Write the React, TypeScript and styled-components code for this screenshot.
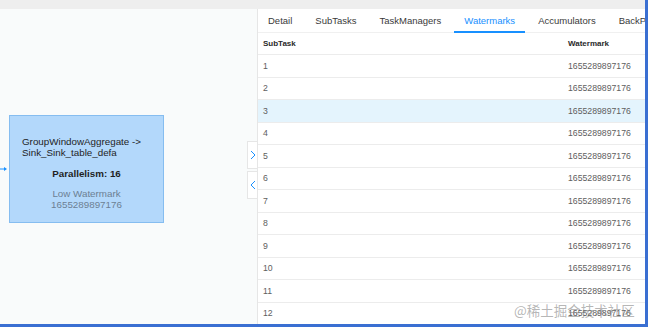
import React from "react";
import styled, { createGlobalStyle } from "styled-components";

const Global = createGlobalStyle`
  html, body { margin: 0; padding: 0; overflow: hidden; background: #ffffff; }
  body { font-family: "Liberation Sans", Arial, sans-serif; }
`;

const Frame = styled.div`
  width: 648px;
  height: 327px;
  box-sizing: border-box;
  border-right: 3px solid #3a6fd2;
  border-bottom: 3px solid #3a6fd2;
  display: flex;
  flex-direction: column;
  overflow: hidden;
  position: relative;
`;

const TopBar = styled.div`
  height: 9px;
  flex: none;
  background: #eeeeee;
`;

const Body = styled.div`
  flex: 1;
  display: flex;
  min-height: 0;
`;

const Canvas = styled.div`
  width: 257px;
  flex: none;
  position: relative;
  background: #f9fbfb;
`;

const Node = styled.div`
  position: absolute;
  left: 9px;
  top: 106px;
  width: 155px;
  height: 108px;
  box-sizing: border-box;
  background: #b3d8fb;
  border: 1px solid #86bdf0;
  padding: 21px 0 0 12px;
  display: flex;
  flex-direction: column;
  font-size: 9.8px;
  color: #1f1f1f;
`;

const NodeTitle = styled.div`
  line-height: 10.5px;
`;

const NodeCenter = styled.div<{ $mt: number; $bold?: boolean; $muted?: boolean }>`
  margin-top: ${(p) => p.$mt}px;
  margin-left: -12px;
  text-align: center;
  line-height: 11.5px;
  font-weight: ${(p) => (p.$bold ? 700 : 400)};
  color: ${(p) => (p.$muted ? "#6c7f93" : "#1f1f1f")};
`;

const EdgeArrow = styled.svg`
  position: absolute;
  left: 0;
  top: 157px;
`;

const Handles = styled.div`
  position: absolute;
  right: 0;
  top: 132px;
  display: flex;
  flex-direction: column;
  gap: 2px;
`;

const Handle = styled.div`
  width: 10px;
  height: 28px;
  box-sizing: border-box;
  background: #ffffff;
  border: 1px solid #e6e6e6;
  border-right: none;
  display: flex;
  align-items: center;
  justify-content: center;
`;

const Panel = styled.div`
  flex: 1;
  min-width: 0;
  border-left: 1px solid #e6e6e6;
  background: #ffffff;
  display: flex;
  flex-direction: column;
  overflow: hidden;
`;

const Tabs = styled.div`
  height: 24px;
  flex: none;
  display: flex;
  gap: 3px;
  border-bottom: 1px solid #f0f0f0;
  box-sizing: border-box;
  white-space: nowrap;
`;

const Tab = styled.div<{ $active?: boolean }>`
  padding: 0 10px;
  font-size: 9.5px;
  line-height: 23px;
  color: ${(p) => (p.$active ? "#1890ff" : "#3a3a3a")};
  border-bottom: 2px solid ${(p) => (p.$active ? "#1890ff" : "transparent")};
  margin-bottom: -1px;
`;

const Row = styled.div<{ $head?: boolean; $hl?: boolean }>`
  display: grid;
  grid-template-columns: 305px 1fr;
  height: ${(p) => (p.$head ? "22px" : "22.5px")};
  align-items: center;
  box-sizing: border-box;
  border-bottom: 1px solid #ececec;
  background: ${(p) => (p.$hl ? "#e4f4fd" : "#ffffff")};
  font-size: ${(p) => (p.$head ? "8px" : "8.7px")};
  font-weight: ${(p) => (p.$head ? 700 : 400)};
  color: ${(p) => (p.$head ? "#2a2a2a" : "#5e5e5e")};
  flex: none;
`;

const Cell = styled.div`
  padding-left: 5px;
  white-space: nowrap;
`;

const Mark = styled.div`
  position: absolute;
  left: 514px;
  top: 302px;
  font-family: "Noto Sans CJK SC", sans-serif;
  font-size: 13.5px;
  line-height: 16px;
  color: rgba(120, 120, 120, 0.55);
  pointer-events: none;
`;

const rows = Array.from({ length: 12 }, (_, i) => i + 1);

const Chevron = ({ dir }: { dir: "left" | "right" }) => (
  <svg width="6" height="10" viewBox="0 0 6 10">
    <path
      d={dir === "right" ? "M1 1 L5 5 L1 9" : "M5 1 L1 5 L5 9"}
      fill="none"
      stroke="#1890ff"
      strokeWidth="1"
    />
  </svg>
);

export default function App() {
  return (
    <Frame>
      <Global />
      <TopBar />
      <Body>
        <Canvas>
          <EdgeArrow width="8" height="6" viewBox="0 0 8 6">
            <line x1="0" y1="3" x2="5" y2="3" stroke="#1890ff" strokeWidth="1" />
            <path d="M4 1 L7 3 L4 5 Z" fill="#1890ff" />
          </EdgeArrow>
          <Node>
            <NodeTitle>GroupWindowAggregate -&gt;</NodeTitle>
            <NodeTitle>Sink_Sink_table_defa</NodeTitle>
            <NodeCenter $mt={10} $bold>
              Parallelism: 16
            </NodeCenter>
            <NodeCenter $mt={8} $muted>
              Low Watermark
            </NodeCenter>
            <NodeCenter $mt={0} $muted>
              1655289897176
            </NodeCenter>
          </Node>
          <Handles>
            <Handle>
              <Chevron dir="right" />
            </Handle>
            <Handle>
              <Chevron dir="left" />
            </Handle>
          </Handles>
        </Canvas>
        <Panel>
          <Tabs>
            <Tab>Detail</Tab>
            <Tab>SubTasks</Tab>
            <Tab>TaskManagers</Tab>
            <Tab $active>Watermarks</Tab>
            <Tab>Accumulators</Tab>
            <Tab>BackPressure</Tab>
          </Tabs>
          <Row $head>
            <Cell>SubTask</Cell>
            <Cell>Watermark</Cell>
          </Row>
          {rows.map((n) => (
            <Row key={n} $hl={n === 3}>
              <Cell>{n}</Cell>
              <Cell>1655289897176</Cell>
            </Row>
          ))}
        </Panel>
      </Body>
      <Mark>@稀土掘金技术社区</Mark>
    </Frame>
  );
}
